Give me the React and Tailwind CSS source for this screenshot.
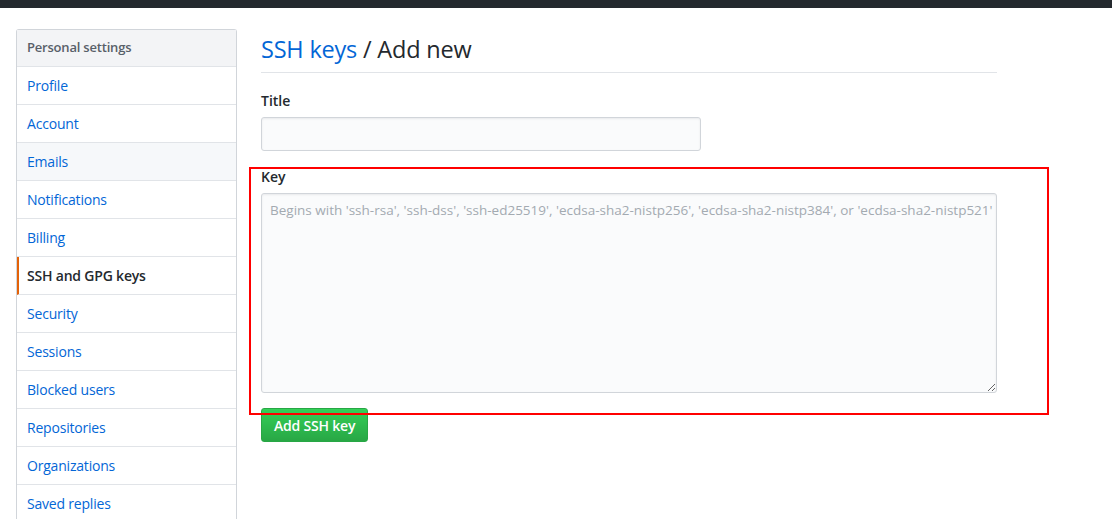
import React from 'react'

const menu = [
  'Profile',
  'Account',
  'Emails',
  'Notifications',
  'Billing',
  'SSH and GPG keys',
  'Security',
  'Sessions',
  'Blocked users',
  'Repositories',
  'Organizations',
  'Saved replies',
]

export default function App() {
  return (
    <div className="h-[519px] overflow-hidden bg-white text-[14px] text-[#24292e]" style={{ fontFamily: '"Open Sans", "Noto Sans", sans-serif' }}>
      <div className="h-2 bg-[#24292e]" />
      <div className="flex gap-6 pl-4 pt-[21px]">
        {/* sidebar */}
        <nav className="w-[221px] shrink-0 rounded-t-[3px] border border-b-0 border-[#d1d5da] tracking-[-0.2px]">
          <div className="flex h-[37px] items-center bg-[#f3f4f6] px-[10px] text-[13px] font-semibold text-[#586069] border-b border-[#e1e4e8]">
            Personal settings
          </div>
          {menu.map((item) => {
            const active = item === 'SSH and GPG keys'
            return (
              <div
                key={item}
                className={`flex h-[38px] items-center border-b border-[#e1e4e8] px-[10px] ${
                  active
                    ? 'border-l-2 border-l-[#e36209] pl-2 font-semibold text-[#24292e]'
                    : item === 'Emails'
                    ? 'bg-[#f6f8fa] text-[#0366d6]'
                    : 'text-[#0366d6]'
                }`}
              >
                {item}
              </div>
            )
          })}
        </nav>

        {/* main */}
        <div className="relative w-[736px]">
          <div className="flex h-[44px] items-end border-b border-[#e1e4e8] pb-[6px]">
            <h2 className="text-[23.5px] font-normal leading-[34px] tracking-[-0.2px]">
              <span className="text-[#0366d6]">SSH keys</span> / Add new
            </h2>
          </div>

          <div className="pt-[18px]">
            <label className="block text-[14px] font-semibold leading-5">Title</label>
            <input
              type="text"
              className="mt-[6px] block h-[34px] w-[440px] rounded-[3px] border border-[#d1d5da] bg-[#fafbfc] px-2 shadow-[inset_0_1px_2px_rgba(27,31,35,0.075)] outline-none"
            />
          </div>

          <div className="pt-[16px]">
            <label className="block text-[14px] font-semibold leading-5">Key</label>
            <textarea
              wrap="off"
              className="mt-[6px] block h-[200px] w-[736px] resize-y overflow-hidden rounded-[3px] border border-[#d1d5da] bg-[#fafbfc] py-[6px] pl-2 pr-0 text-[13.5px] leading-5 placeholder-[#a3aab1] shadow-[inset_0_1px_2px_rgba(27,31,35,0.075)] outline-none"
              placeholder="Begins with 'ssh-rsa', 'ssh-dss', 'ssh-ed25519', 'ecdsa-sha2-nistp256', 'ecdsa-sha2-nistp384', or 'ecdsa-sha2-nistp521'"
            />
          </div>

          <button className="mt-[15px] h-[34px] rounded-[3px] border border-[#28a745] bg-gradient-to-b from-[#34d058] to-[#28a745] px-3 text-[14px] font-semibold tracking-[-0.2px] text-white">
            Add SSH key
          </button>

          {/* annotation box */}
          <div className="pointer-events-none absolute left-[-12px] top-[138px] h-[248px] w-[800px] border-2 border-[#ff0000]" />
        </div>
      </div>
    </div>
  )
}
